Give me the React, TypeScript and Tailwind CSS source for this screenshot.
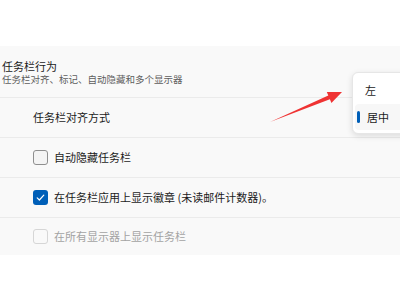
import React from "react";

const font = { fontFamily: '"Noto Sans CJK SC", "Noto Sans", sans-serif' };

function Box({ state }: { state: "off" | "on" | "disabled" }) {
  if (state === "on")
    return (
      <div className="w-[15px] h-[15px] rounded-[3px] bg-[#005fb8] flex items-center justify-center">
        <svg width="11" height="11" viewBox="0 0 11 11">
          <polyline points="2.2,5.8 4.4,8 8.8,3.2" fill="none" stroke="white" strokeWidth="1.2" strokeLinecap="round" strokeLinejoin="round" />
        </svg>
      </div>
    );
  if (state === "disabled")
    return <div className="w-[15px] h-[15px] rounded-[3px] border border-[#d6d6d6] bg-[#f9f9f9]" />;
  return <div className="w-[15px] h-[15px] rounded-[3px] border border-[#8f8f8f] bg-[#f4f4f4]" />;
}

export default function App() {
  return (
    <div className="relative w-[400px] h-[300px] bg-white overflow-hidden" style={font}>
      <div className="h-[46px]" />
      <div className="bg-[#f9f9f9] flex flex-col">
        <div className="h-[51px] flex flex-col justify-center pl-[2px] pt-[1px]">
          <div className="text-[11px] leading-[14px] text-[#1b1b1b]">任务栏行为</div>
          <div className="text-[9.5px] leading-[13px] text-[#5d5d5d]">任务栏对齐、标记、自动隐藏和多个显示器</div>
        </div>
        <div className="h-px bg-[#ebebeb]" />
        <div className="h-[39px] flex items-center pl-[33px] text-[11px] text-[#1b1b1b]">任务栏对齐方式</div>
        <div className="h-px bg-[#ebebeb]" />
        <div className="h-[39px] flex items-center pl-[33px] gap-[6px] text-[11px] text-[#1b1b1b]">
          <Box state="off" />
          <span>自动隐藏任务栏</span>
        </div>
        <div className="h-px bg-[#ebebeb]" />
        <div className="h-[39px] flex items-center pl-[33px] gap-[6px] text-[11px] text-[#1b1b1b]">
          <Box state="on" />
          <span>在任务栏应用上显示徽章 (未读邮件计数器)。</span>
        </div>
        <div className="h-px bg-[#ebebeb]" />
        <div className="h-[37px] flex items-center pl-[33px] gap-[6px] text-[11px] text-[#a3a3a3]">
          <Box state="disabled" />
          <span>在所有显示器上显示任务栏</span>
        </div>
      </div>

      <div className="absolute left-[352px] top-[72px] w-[70px] h-[62px] rounded-[6px] bg-white border border-[#e6e6e6] shadow-[0_2px_6px_rgba(0,0,0,0.12)] flex flex-col py-[3px]">
        <div className="h-[28px] flex items-center pl-[12px] text-[11px] text-[#1b1b1b]">左</div>
        <div className="h-[26px] flex items-center relative pl-[12px] text-[11px] text-[#1b1b1b] bg-[#f7f7f7] mx-[2px] rounded-[4px]">
          <div className="absolute left-[2px] top-[7px] w-[3px] h-[12px] rounded-full bg-[#005fb8]" />
          <span className="pl-[-2px]">居中</span>
        </div>
      </div>

      <svg className="absolute left-0 top-0" width="400" height="300" viewBox="0 0 400 300">
        <polygon points="270,122 328.3,95.6 326.8,91.9 342,92 331.4,102.9 329.9,99.2" fill="#ef3333" />
      </svg>
    </div>
  );
}
